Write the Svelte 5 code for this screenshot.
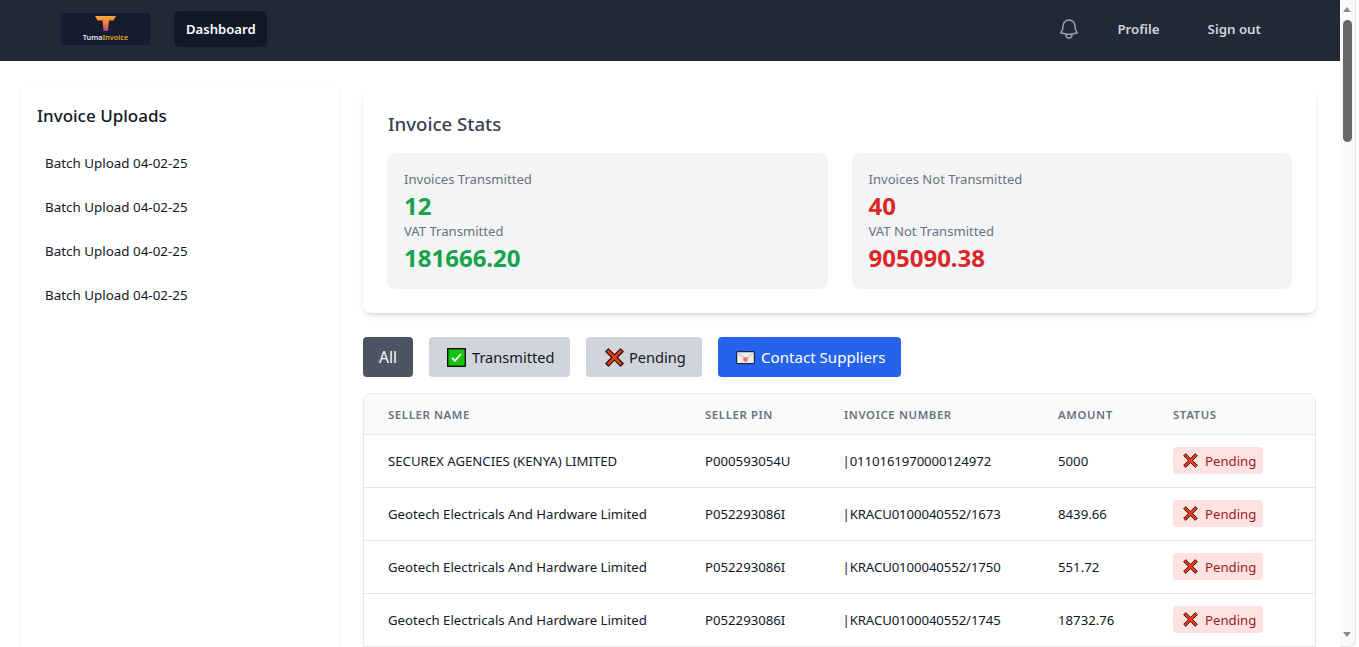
<script>
  const rows = [
    ['SECUREX AGENCIES (KENYA) LIMITED', 'P000593054U', '|0110161970000124972', '5000'],
    ['Geotech Electricals And Hardware Limited', 'P052293086I', '|KRACU0100040552/1673', '8439.66'],
    ['Geotech Electricals And Hardware Limited', 'P052293086I', '|KRACU0100040552/1750', '551.72'],
    ['Geotech Electricals And Hardware Limited', 'P052293086I', '|KRACU0100040552/1745', '18732.76']
  ];
  const batches = ['Batch Upload 04-02-25', 'Batch Upload 04-02-25', 'Batch Upload 04-02-25', 'Batch Upload 04-02-25'];
</script>

{#snippet cross(size)}
  <svg class="emoji" width={size} height={size} viewBox="0 0 18 18" aria-hidden="true">
    <path d="M0.800 3.300 3.300 0.800 9 6.500 14.700 0.800 17.200 3.300 11.500 9 17.200 14.700 14.700 17.200 9 11.500 3.300 17.200 0.800 14.700 6.500 9z" fill="#f03a17" stroke="#2a1410" stroke-width="1.200" stroke-linejoin="round"/>
  </svg>
{/snippet}

<div class="shell">
  <div class="page">
    <header class="nav">
      <div class="nav-left">
        <div class="logo">
          <svg width="21" height="15" viewBox="0 0 21 15" aria-hidden="true">
            <defs>
              <linearGradient id="tg" x1="0" y1="0" x2="0" y2="1">
                <stop offset="0" stop-color="#f9a63a"/>
                <stop offset="0.5" stop-color="#ee7d3c"/>
                <stop offset="1" stop-color="#a8409a"/>
              </linearGradient>
            </defs>
            <path d="M0 0h21l-2.500 4.500H14L13 15H8.500L7.500 4.500H2.500z" fill="url(#tg)"/>
          </svg>
          <span class="logo-text">Tuma<em>Invoice</em></span>
        </div>
        <a class="dash" href="#top">Dashboard</a>
      </div>
      <div class="nav-right">
        <svg class="bell" width="24" height="24" viewBox="0 0 24 24" fill="none" stroke="currentColor" stroke-width="1.5" aria-hidden="true">
          <path stroke-linecap="round" stroke-linejoin="round" d="M14.857 17.082a23.848 23.848 0 0 0 5.454-1.310A8.967 8.967 0 0 1 18 9.750V9A6 6 0 0 0 6 9v.75a8.967 8.967 0 0 1-2.312 6.022c1.733.64 3.560 1.085 5.455 1.310m5.714 0a24.255 24.255 0 0 1-5.714 0m5.714 0a3 3 0 1 1-5.714 0"/>
        </svg>
        <a class="nav-link profile" href="#top">Profile</a>
        <a class="nav-link" href="#top">Sign out</a>
      </div>
    </header>

    <div class="body">
      <aside class="side">
        <h2>Invoice Uploads</h2>
        <ul>
          {#each batches as b}
            <li>{b}</li>
          {/each}
        </ul>
      </aside>

      <main class="main">
        <section class="stats">
          <h2>Invoice Stats</h2>
          <div class="stat-grid">
            <div class="stat green">
              <p class="label">Invoices Transmitted</p>
              <p class="value">12</p>
              <p class="label">VAT Transmitted</p>
              <p class="value">181666.20</p>
            </div>
            <div class="stat red">
              <p class="label">Invoices Not Transmitted</p>
              <p class="value">40</p>
              <p class="label">VAT Not Transmitted</p>
              <p class="value">905090.38</p>
            </div>
          </div>
        </section>

        <div class="filters">
          <button class="btn all">All</button>
          <button class="btn grey w-trans">
            <svg class="emoji" width="19" height="19" viewBox="0 0 19 19" aria-hidden="true">
              <rect x="0.700" y="0.700" width="17.600" height="17.600" fill="#16c60c" stroke="#111" stroke-width="1.400"/>
              <path d="M5 9.800 8 12.800 14 6" fill="none" stroke="#fff" stroke-width="1.800"/>
            </svg>
            Transmitted
          </button>
          <button class="btn grey w-pend">{@render cross(19)} Pending</button>
          <button class="btn blue w-contact">
            <svg class="emoji" width="19" height="15" viewBox="0 0 19 15" aria-hidden="true">
              <rect x="0.600" y="1.600" width="17.800" height="12" rx="1" fill="#ececec" stroke="#1c2540" stroke-width="1.200"/>
              <path d="M1.500 3 9.500 9 17.500 3" fill="none" stroke="#b9b9b9" stroke-width="1"/>
              <circle cx="9.500" cy="9.500" r="2.400" fill="#ee7560"/>
            </svg>
            Contact Suppliers
          </button>
        </div>

        <div class="table-wrap">
          <table>
            <colgroup>
              <col class="c1"/><col class="c2"/><col class="c3"/><col class="c4"/><col class="c5"/>
            </colgroup>
            <thead>
              <tr>
                <th>Seller Name</th>
                <th>Seller PIN</th>
                <th>Invoice Number</th>
                <th>Amount</th>
                <th>Status</th>
              </tr>
            </thead>
            <tbody>
              {#each rows as r}
                <tr>
                  <td>{r[0]}</td>
                  <td>{r[1]}</td>
                  <td class="num">{r[2]}</td>
                  <td>{r[3]}</td>
                  <td><span class="badge">{@render cross(15)} Pending</span></td>
                </tr>
              {/each}
            </tbody>
          </table>
        </div>
      </main>
    </div>
  </div>

  <div class="scrollbar" aria-hidden="true">
    <span class="arrow up"></span>
    <span class="thumb"></span>
    <span class="arrow down"></span>
  </div>
</div>

<style>
  :global(body) {
    margin: 0;
    background: #fff;
    overflow: hidden;
  }
  * {
    box-sizing: border-box;
  }
  .shell {
    display: flex;
    height: 647px;
    overflow: hidden;
    font-family: "Noto Sans", "Open Sans", sans-serif;
    color: #111827;
  }
  .page {
    width: 1340px;
    flex: none;
    height: 100%;
    overflow: hidden;
  }
  .nav {
    height: 61px;
    background: #1f2937;
    display: flex;
    justify-content: space-between;
    align-items: center;
    padding: 0 79px 3px 61px;
  }
  .nav-left,
  .nav-right {
    display: flex;
    align-items: center;
  }
  .nav-left {
    gap: 24px;
  }
  .logo {
    width: 89px;
    height: 32px;
    background: #141c2e;
    display: flex;
    flex-direction: column;
    align-items: center;
    padding-top: 3px;
  }
  .logo svg {
    display: block;
    margin-bottom: 2px;
  }
  .logo-text {
    font-size: 7.300px;
    line-height: 9px;
    font-weight: 600;
    color: #e4e6ea;
  }
  .logo-text em {
    font-style: normal;
    color: #e0a63c;
  }
  .dash {
    background: #111827;
    color: #fff;
    border-radius: 6px;
    font-size: 13.100px;
    font-weight: 600;
    line-height: 20px;
    padding: 8px 12px;
    height: 36px;
    width: 93px;
    text-decoration: none;
    white-space: nowrap;
  }
  .bell {
    color: #9ca3af;
    margin-right: 36px;
  }
  .nav-link {
    color: #d1d5db;
    font-size: 13.300px;
    font-weight: 600;
    text-decoration: none;
    white-space: nowrap;
  }
  .profile {
    margin-right: 48px;
  }
  .body {
    display: flex;
    gap: 24px;
    padding: 27px 24px 0 21px;
    align-items: flex-start;
  }
  .side {
    width: 318px;
    flex: none;
    height: 700px;
    background: #fff;
    box-shadow: 0 1px 3px rgba(0, 0, 0, 0.1), 0 1px 2px -1px rgba(0, 0, 0, 0.1);
    padding: 16px;
  }
  .side h2 {
    margin: 0 0 14px;
    font-size: 17px;
    line-height: 23px;
    font-weight: 500;
    color: #111827;
  }
  .side ul {
    margin: 0;
    padding: 0;
    list-style: none;
  }
  .side li {
    height: 44px;
    padding-left: 8px;
    font-size: 13.400px;
    line-height: 44px;
    white-space: nowrap;
  }
  .main {
    flex: 1;
    min-width: 0;
  }
  .stats {
    height: 225px;
    background: #fff;
    border-radius: 8px;
    padding: 24px 24px 24px 25px;
    box-shadow: 0 4px 6px -1px rgba(0, 0, 0, 0.1), 0 2px 4px -2px rgba(0, 0, 0, 0.1);
    margin-bottom: 24px;
  }
  .stats h2 {
    margin: 0 0 17px;
    font-size: 18.600px;
    line-height: 24px;
    font-weight: 500;
    color: #374151;
  }
  .stat-grid {
    display: grid;
    grid-template-columns: 1fr 1fr;
    gap: 24px;
    margin-left: -1px;
  }
  .stat {
    background: #f3f4f6;
    border-radius: 8px;
    height: 136px;
    padding: 17px 16px 0 17px;
  }
  .label {
    margin: 0 0 2px;
    font-size: 13.100px;
    line-height: 18px;
    color: #6b7280;
  }
  .value {
    margin: 0;
    font-size: 24px;
    line-height: 32px;
    font-weight: 700;
  }
  .green .value {
    color: #16a34a;
  }
  .red .value {
    color: #dc2626;
  }
  .filters {
    display: flex;
    gap: 16px;
    margin-bottom: 16px;
  }
  .btn {
    height: 40px;
    border: 0;
    border-radius: 4px;
    padding: 0 0 0 18px;
    font: inherit;
    font-size: 15.100px;
    display: inline-flex;
    align-items: center;
    gap: 6px;
    white-space: nowrap;
  }
  .all {
    background: #4b5563;
    color: #fff;
    width: 50px;
    padding-left: 16px;
    font-size: 15.500px;
  }
  .w-trans { width: 141px; }
  .w-pend { width: 116px; padding-left: 19px; gap: 5px; }
  .w-contact { width: 183px; }
  .grey {
    background: #d1d5db;
    color: #111827;
    font-size: 14.600px;
  }
  .blue {
    background: #2563eb;
    color: #fff;
  }
  .emoji {
    flex: none;
    display: inline-block;
  }
  .table-wrap {
    border: 1px solid #e5e7eb;
    border-radius: 8px 8px 0 0;
    overflow: hidden;
  }
  table {
    width: 100%;
    table-layout: fixed;
    border-collapse: collapse;
  }
  .c1 { width: 317px; }
  .c2 { width: 139px; }
  .c3 { width: 214px; }
  .c4 { width: 115px; }
  th {
    background: #f9fafb;
    height: 40px;
    padding: 1px 24px 0;
    text-align: left;
    font-size: 11.400px;
    font-weight: 600;
    letter-spacing: 0.6px;
    text-transform: uppercase;
    color: #6b7280;
    white-space: nowrap;
  }
  td {
    height: 53px;
    padding: 0 24px;
    font-size: 13.200px;
    border-top: 1px solid #e5e7eb;
    white-space: nowrap;
    color: #111827;
  }
  td.num {
    padding-left: 22.500px;
    letter-spacing: -0.1px;
  }
  .badge {
    display: inline-flex;
    align-items: center;
    gap: 7px;
    width: 90px;
    height: 27px;
    padding: 0 10px;
    border-radius: 4px;
    background: #fee2e2;
    color: #991b1b;
  }
  .scrollbar {
    width: 19px;
    flex: none;
    background: #fff;
    position: relative;
  }
  .scrollbar::before {
    content: "";
    position: absolute;
    inset: 0 3px 0 0;
    background: #fafafa;
    border-right: 1px solid #e6e6e6;
    border-bottom: 1px solid #e6e6e6;
    border-bottom-right-radius: 7px;
  }
  .thumb {
    position: absolute;
    left: 3px;
    top: 20px;
    width: 9px;
    height: 122px;
    border-radius: 5px;
    background: #686868;
  }
  .arrow {
    position: absolute;
    left: 3px;
    width: 0;
    height: 0;
    border-left: 4.500px solid transparent;
    border-right: 4.500px solid transparent;
  }
  .up {
    top: 7px;
    border-bottom: 5px solid #8a8a8a;
  }
  .down {
    bottom: 10px;
    border-top: 5px solid #8a8a8a;
  }
</style>
